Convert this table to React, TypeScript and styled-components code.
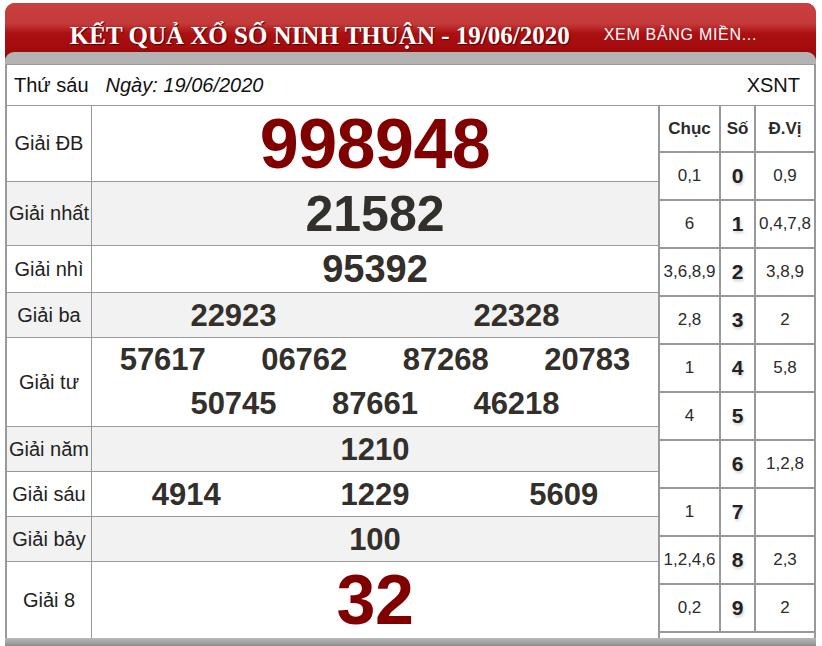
import React from "react";
import styled, { createGlobalStyle } from "styled-components";

const Global = createGlobalStyle`
  html, body { margin: 0; padding: 0; background: #fff; }
  body { font-family: "Liberation Sans", Arial, sans-serif; }
`;

const Page = styled.div`
  width: 811px;
  margin: 3px 0 0 5px;
`;

const Banner = styled.div`
  background: #a00a0b;
  border-radius: 10px 10px 0 0;
  overflow: hidden;
`;

const TitleBar = styled.div`
  box-sizing: border-box;
  height: 49px;
  padding: 15px 0 0 6px;
  display: flex;
  align-items: center;
  justify-content: center;
  gap: 34px;
  background: linear-gradient(
    to bottom,
    #c9403f 0%,
    #c43a3b 42%,
    #ab1012 62%,
    #a10a0b 100%
  );
`;

const Title = styled.h1`
  margin: 0;
  font-family: "Liberation Serif", "Times New Roman", serif;
  font-weight: bold;
  font-size: 25px;
  line-height: 1;
  color: #fff;
  text-shadow: 1px 1px 1px #4a0000;
  white-space: nowrap;
`;

const MoreLink = styled.a`
  font-size: 16px;
  letter-spacing: 0.7px;
  color: #fff;
  text-decoration: none;
  white-space: nowrap;
`;

const Band = styled.div`
  height: 12px;
  background: #b3b3b3;
  border-radius: 9px 9px 0 0;
`;

const Sheet = styled.div`
  border-left: 2px solid #999;
  border-right: 2px solid #999;
  background: #fff;
`;

const DateRow = styled.div`
  box-sizing: border-box;
  height: 42px;
  border-top: 1px solid #9a9a9a;
  border-bottom: 1px solid #999;
  display: flex;
  align-items: center;
  padding: 0 14px 0 7px;
  font-size: 20px;
  color: #111;
`;

const DateText = styled.span`
  margin-left: 17px;
  font-style: italic;
`;

const Code = styled.span`
  margin-left: auto;
`;

const Body = styled.div`
  display: flex;
`;

const Results = styled.div`
  width: 651px;
  flex: none;
  display: flex;
  flex-direction: column;
`;

const PrizeRow = styled.div<{ $h: number; $alt?: boolean; $last?: boolean }>`
  box-sizing: border-box;
  height: ${(p) => p.$h}px;
  display: grid;
  grid-template-columns: 85px 1fr;
  background: ${(p) => (p.$alt ? "#f2f2f2" : "#fff")};
  border-bottom: ${(p) => (p.$last ? "none" : "1px solid #999")};
`;

const Label = styled.div`
  border-right: 1px solid #999;
  display: flex;
  align-items: center;
  justify-content: center;
  font-size: 20px;
  color: #222;
  white-space: nowrap;
`;

const Numbers = styled.div`
  display: flex;
  flex-wrap: wrap;
  justify-content: center;
  align-content: center;
`;

const Num = styled.span<{ $size: number; $w: number; $red?: boolean; $lh?: number }>`
  width: ${(p) => p.$w}%;
  text-align: center;
  font-weight: bold;
  font-size: ${(p) => p.$size}px;
  line-height: ${(p) => (p.$lh ? `${p.$lh}px` : "1")};
  letter-spacing: ${(p) => (p.$red ? "-0.5px" : "0")};
  color: ${(p) => (p.$red ? "#800000" : "#332f2b")};
`;

const Loto = styled.div`
  box-sizing: border-box;
  width: 156px;
  flex: none;
  display: grid;
  grid-template-columns: 59px 33px 58px;
  grid-template-rows: 45px repeat(10, 46px) 1fr;
  gap: 2px;
  padding-left: 2px;
  background: #999;
`;

const LotoHead = styled.div`
  background: #fff;
  display: flex;
  align-items: center;
  justify-content: center;
  font-weight: bold;
  font-size: 17px;
  color: #2b2b2b;
`;

const LotoCell = styled.div`
  background: #fff;
  display: flex;
  align-items: center;
  justify-content: center;
  font-size: 17px;
  color: #2b2b2b;
  white-space: nowrap;
`;

const LotoKey = styled(LotoCell)`
  font-weight: bold;
  font-size: 21px;
  color: #222;
  text-shadow: 1px 2px 3px #cfcfcf;
`;

const LotoFill = styled.div`
  grid-column: 1 / -1;
  background: #fff;
`;

const Footer = styled.div`
  height: 10px;
  background: linear-gradient(to bottom, #b9b9b9 0%, #9a9a9a 60%, #7a7a7a 100%);
`;

type Prize = {
  label: string;
  h: number;
  nums: string[];
  size: number;
  w: number;
  red?: boolean;
  lh?: number;
};

const prizes: Prize[] = [
  { label: "Giải ĐB", h: 76, nums: ["998948"], size: 70, w: 100, red: true },
  { label: "Giải nhất", h: 64, nums: ["21582"], size: 50, w: 100 },
  { label: "Giải nhì", h: 47, nums: ["95392"], size: 38, w: 100 },
  { label: "Giải ba", h: 45, nums: ["22923", "22328"], size: 31, w: 50 },
  {
    label: "Giải tư",
    h: 89,
    nums: ["57617", "06762", "87268", "20783", "50745", "87661", "46218"],
    size: 31,
    w: 25,
    lh: 44,
  },
  { label: "Giải năm", h: 45, nums: ["1210"], size: 31, w: 100 },
  { label: "Giải sáu", h: 45, nums: ["4914", "1229", "5609"], size: 31, w: 33.333 },
  { label: "Giải bảy", h: 45, nums: ["100"], size: 31, w: 100 },
  { label: "Giải 8", h: 76, nums: ["32"], size: 70, w: 100, red: true },
];

const loto: [string, string, string][] = [
  ["0,1", "0", "0,9"],
  ["6", "1", "0,4,7,8"],
  ["3,6,8,9", "2", "3,8,9"],
  ["2,8", "3", "2"],
  ["1", "4", "5,8"],
  ["4", "5", ""],
  ["", "6", "1,2,8"],
  ["1", "7", ""],
  ["1,2,4,6", "8", "2,3"],
  ["0,2", "9", "2"],
];

export default function App() {
  return (
    <>
      <Global />
      <Page>
        <Banner>
          <TitleBar>
            <Title>KẾT QUẢ XỔ SỐ NINH THUẬN - 19/06/2020</Title>
            <MoreLink href="#">XEM BẢNG MIỀN...</MoreLink>
          </TitleBar>
          <Band />
        </Banner>
        <Sheet>
          <DateRow>
            <span>Thứ sáu</span>
            <DateText>Ngày: 19/06/2020</DateText>
            <Code>XSNT</Code>
          </DateRow>
          <Body>
            <Results>
              {prizes.map((p, i) => (
                <PrizeRow key={p.label} $h={p.h} $alt={i % 2 === 1} $last={i === prizes.length - 1}>
                  <Label>{p.label}</Label>
                  <Numbers>
                    {p.nums.map((n, j) => (
                      <Num key={j} $size={p.size} $w={p.w} $red={p.red} $lh={p.lh}>
                        {n}
                      </Num>
                    ))}
                  </Numbers>
                </PrizeRow>
              ))}
            </Results>
            <Loto>
              <LotoHead>Chục</LotoHead>
              <LotoHead>Số</LotoHead>
              <LotoHead>Đ.Vị</LotoHead>
              {loto.map(([c, k, d]) => (
                <React.Fragment key={k}>
                  <LotoCell>{c}</LotoCell>
                  <LotoKey>{k}</LotoKey>
                  <LotoCell>{d}</LotoCell>
                </React.Fragment>
              ))}
              <LotoFill />
            </Loto>
          </Body>
        </Sheet>
        <Footer />
      </Page>
    </>
  );
}
